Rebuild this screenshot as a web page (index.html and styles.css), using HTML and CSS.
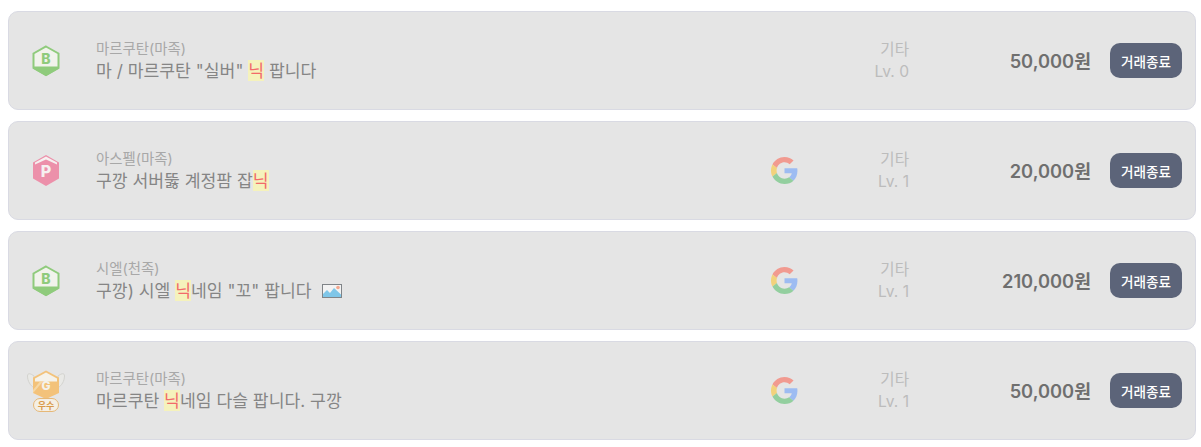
FILE: index.html
```html
<!DOCTYPE html>
<html lang="ko">
<head>
    <meta charset="UTF-8">
    <title>거래 목록</title>
    <link rel="stylesheet" href="styles.css">
</head>
<body>
    <svg class="defs" width="0" height="0">
        <symbol id="google" viewBox="0 0 48 48">
            <path fill="#f19a90" d="M24 9.500c3.500 0 6.700 1.200 9.200 3.600l6.900-6.900C35.900 2.400 30.500 0 24 0 14.600 0 6.500 5.400 2.600 13.200l8 6.200C12.400 13.700 17.700 9.500 24 9.500z"/>
            <path fill="#9dbcf2" d="M47 24.500c0-1.600-.1-3.100-.4-4.500H24v9h12.900c-.6 3-2.200 5.500-4.800 7.200l7.700 6C44.400 38 47 31.800 47 24.500z"/>
            <path fill="#f2d27c" d="M10.600 28.600c-.5-1.400-.7-3-.7-4.600s.3-3.200.7-4.600l-8-6.200C.900 16.500 0 20.100 0 24s.9 7.500 2.600 10.800l8-6.200z"/>
            <path fill="#93cf9f" d="M24 48c6.500 0 11.900-2.100 15.900-5.800l-7.700-6c-2.100 1.400-4.900 2.300-8.200 2.300-6.300 0-11.600-4.200-13.400-9.900l-8 6.200C6.500 42.600 14.600 48 24 48z"/>
        </symbol>
    </svg>

    <div class="list">
        <div class="card">
            <div class="grade">
                <svg class="badge" viewBox="0 0 28 32">
                    <path fill="#f1f3ec" stroke="#8fcb7c" stroke-width="2" d="M14 1.500 26.500 8.500V23L14 30 1.500 23V8.500z"/>
                    <path fill="#8fcb7c" d="M1 21.500H27V23.500L14 31 1 23.500z"/>
                    <text class="badge-letter badge-letter-b" x="14" y="18.500" text-anchor="middle">B</text>
                </svg>
            </div>
            <div class="info">
                <div class="server">마르쿠탄(마족)</div>
                <div class="title">마 / 마르쿠탄 "실버" <mark>닉</mark> 팝니다</div>
            </div>
            <div class="login"></div>
            <div class="level"><span>기타</span><span>Lv. 0</span></div>
            <div class="price">50,000원</div>
            <button class="done">거래종료</button>
        </div>
        <div class="card">
            <div class="grade">
                <svg class="badge" viewBox="0 0 28 32">
                    <path fill="#ec90aa" d="M14 0 27 7.500V23.500L14 31 1 23.500V7.500z"/>
                    <path fill="#f6f0f0" d="M14 1.500 25 7.500V9.500L14 4.500 3 9.500V7.500z"/>
                    <text class="badge-letter badge-letter-p" x="14" y="22" text-anchor="middle">P</text>
                </svg>
            </div>
            <div class="info">
                <div class="server">아스펠(마족)</div>
                <div class="title">구깡 서버뚫 계정팜 잡<mark>닉</mark></div>
            </div>
            <div class="login"><svg class="google"><use href="#google"/></svg></div>
            <div class="level"><span>기타</span><span>Lv. 1</span></div>
            <div class="price">20,000원</div>
            <button class="done">거래종료</button>
        </div>
        <div class="card">
            <div class="grade">
                <svg class="badge" viewBox="0 0 28 32">
                    <path fill="#f1f3ec" stroke="#8fcb7c" stroke-width="2" d="M14 1.500 26.500 8.500V23L14 30 1.500 23V8.500z"/>
                    <path fill="#8fcb7c" d="M1 21.500H27V23.500L14 31 1 23.500z"/>
                    <text class="badge-letter badge-letter-b" x="14" y="18.500" text-anchor="middle">B</text>
                </svg>
            </div>
            <div class="info">
                <div class="server">시엘(천족)</div>
                <div class="title">구깡) 시엘 <mark>닉</mark>네임 "꼬" 팝니다
                    <svg class="pic" viewBox="0 0 20 14">
                        <rect x=".5" y=".5" width="19" height="13" fill="#f3f3f3" stroke="#808488"/>
                        <circle cx="16" cy="3.500" r="1.800" fill="#f3a78e"/>
                        <path fill="#7fc6e8" d="M1 13V10L5 6l3 3 4-5 7 6.500V13z"/>
                    </svg>
                </div>
            </div>
            <div class="login"><svg class="google"><use href="#google"/></svg></div>
            <div class="level"><span>기타</span><span>Lv. 1</span></div>
            <div class="price">210,000원</div>
            <button class="done">거래종료</button>
        </div>
        <div class="card">
            <div class="grade">
                <svg class="badge-wide" viewBox="0 0 40 44">
                    <path fill="#e9e9e6" stroke="#d3d3cf" d="M8 7C4 4 1.500 4 1.500 7c0 5 3 10 6.500 11.500zM32 7c4-3 6.500-3 6.500 0 0 5-3 10-6.500 11.500z"/>
                    <path fill="#f3c27a" d="M20 1.500 33 8.500V24L20 30 7 24V8.500z"/>
                    <path fill="#f5f2ea" d="M20 3.500 31 9.500V12.500H9V9.500z"/>
                    <path fill="#f6d8a6" d="M7 21 14 12.500H17L7 24z"/>
                    <text class="badge-letter badge-letter-g" x="20" y="21" text-anchor="middle">G</text>
                    <rect x="7.500" y="29.500" width="25" height="13" rx="6.500" fill="#f5efe4" stroke="#e6b877"/>
                    <text class="badge-tag" x="20" y="39.500" text-anchor="middle">우수</text>
                </svg>
            </div>
            <div class="info">
                <div class="server">마르쿠탄(마족)</div>
                <div class="title">마르쿠탄 <mark>닉</mark>네임 다슬 팝니다. 구깡</div>
            </div>
            <div class="login"><svg class="google"><use href="#google"/></svg></div>
            <div class="level"><span>기타</span><span>Lv. 1</span></div>
            <div class="price">50,000원</div>
            <button class="done">거래종료</button>
        </div>
    </div>
</body>
</html>
```

FILE: styles.css
```css
body {
    margin: 0;
    padding: 11px 5px 0 8px;
    background-color: #fff;
    font-family: Inter, "Noto Sans CJK KR", sans-serif;
}
.defs {
    display: block;
    height: 0;
}
.list {
    display: flex;
    flex-direction: column;
    gap: 11px;
}
.card {
    display: flex;
    align-items: center;
    box-sizing: border-box;
    height: 99px;
    padding: 0 13px 0 14px;
    background-color: #e5e5e5;
    border: 1px solid #d9dae3;
    border-radius: 10px;
}
.grade {
    display: flex;
    justify-content: center;
    width: 46px;
    margin-right: 27px;
}
.badge {
    width: 28px;
    height: 32px;
}
.badge-wide {
    width: 40px;
    height: 44px;
}
.badge-letter {
    font-size: 14px;
    font-weight: 800;
}
.badge-letter-b {
    fill: #8fcb7c;
}
.badge-letter-p {
    fill: #f6f0f0;
    font-size: 16px;
}
.badge-letter-g {
    fill: #f5f2ea;
    font-size: 12px;
}
.badge-tag {
    fill: #d99a4a;
    font-size: 9px;
    font-weight: 700;
}
.info {
    flex: 1;
    min-width: 0;
}
.server {
    font-size: 14.4px;
    line-height: 20px;
    color: #a8a8a8;
}
.title {
    font-size: 17.2px;
    line-height: 24px;
    color: #858585;
}
.title mark {
    background-color: #f5f2bc;
    color: #f26a6a;
}
.pic {
    width: 20px;
    height: 14px;
    margin-left: 6px;
    vertical-align: -1px;
}
.login {
    width: 28px;
    height: 28px;
}
.google {
    width: 27px;
    height: 27px;
    margin-left: 1px;
}
.level {
    display: flex;
    flex-direction: column;
    gap: 2px;
    width: 111px;
    padding-top: 1px;
    font-size: 15.6px;
    line-height: 20px;
    text-align: right;
    color: #bcbcbc;
}
.price {
    width: 182px;
    padding-bottom: 2px;
    font-size: 18.3px;
    font-weight: 600;
    text-align: right;
    color: #6f6f6f;
}
.done {
    width: 72px;
    height: 35px;
    margin-left: 19px;
    padding: 0;
    border: none;
    border-radius: 10px;
    background-color: #5c6479;
    color: #fff;
    font-family: inherit;
    font-size: 13.6px;
    font-weight: 500;
    cursor: pointer;
}
```
